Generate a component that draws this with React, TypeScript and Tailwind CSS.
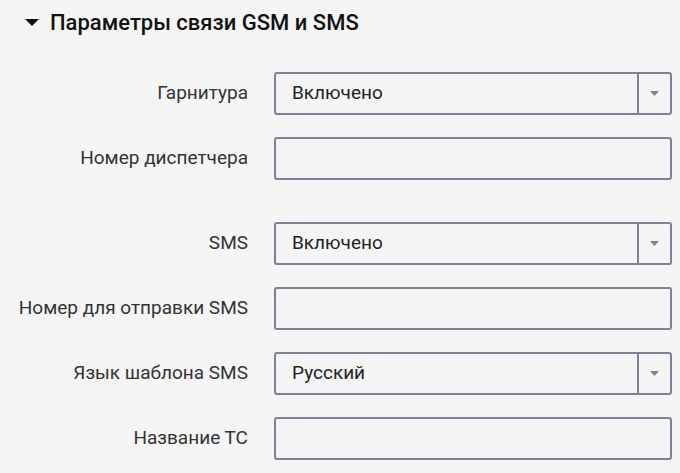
import React from "react";

type Field = {
  label: string;
  value?: string;
  select?: boolean;
  gapBefore?: boolean;
};

const fields: Field[] = [
  { label: "Гарнитура", value: "Включено", select: true },
  { label: "Номер диспетчера" },
  { label: "SMS", value: "Включено", select: true, gapBefore: true },
  { label: "Номер для отправки SMS" },
  { label: "Язык шаблона SMS", value: "Русский", select: true },
  { label: "Название ТС" },
];

function Row({ field }: { field: Field }) {
  return (
    <div className={`flex items-center ${field.gapBefore ? "mt-[42px]" : "mt-[22px]"} first:mt-0`}>
      <div className="w-[248px] shrink-0 text-right text-[19px] text-[#333]">
        {field.label}
      </div>
      <div className="ml-[26px] flex h-[43px] w-[398px] items-stretch rounded-[3px] border-2 border-[#7a8494] bg-[#f5f5f5]">
        {field.select ? (
          <>
            <div className="flex flex-1 items-center pl-[16px] text-[19px] text-[#222]">
              {field.value}
            </div>
            <div className="flex w-[33px] items-center justify-center border-l-2 border-[#7a8494]">
              <svg width="9" height="5" viewBox="0 0 9 5">
                <polygon points="0,0 9,0 4.5,5" fill="#7a8494" />
              </svg>
            </div>
          </>
        ) : null}
      </div>
    </div>
  );
}

export default function App() {
  return (
    <div
      className="min-h-[473px] w-[680px] bg-[#f5f5f5]"
      style={{ fontFamily: "Roboto, 'Noto Sans', sans-serif" }}
    >
      <div className="flex h-[44px] items-center">
        <svg className="ml-[25px]" width="14" height="7" viewBox="0 0 14 7">
          <polygon points="0,0 14,0 7,7" fill="#111" />
        </svg>
        <h2 className="ml-[11px] text-[22px] font-medium text-[#111]">
          Параметры связи GSM и SMS
        </h2>
      </div>
      <div className="pt-[28px]">
        {fields.map((f) => (
          <Row key={f.label} field={f} />
        ))}
      </div>
    </div>
  );
}
